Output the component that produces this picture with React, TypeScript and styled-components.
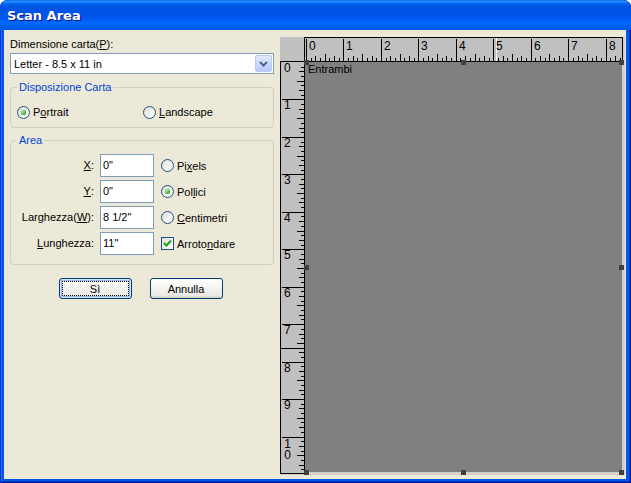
import React from 'react';
import styled, { createGlobalStyle } from 'styled-components';

const PPI = 37.45;

const GlobalStyle = createGlobalStyle`
  html, body {
    margin: 0;
    padding: 0;
    background: #ffffff;
  }
  body {
    font-family: "Liberation Sans", Arial, sans-serif;
    font-size: 11px;
    color: #000;
  }
`;

const Window = styled.div`
  width: 631px;
  height: 483px;
  box-sizing: border-box;
  display: flex;
  flex-direction: column;
  background: #0055ea;
  border-radius: 8px 8px 0 0;
  overflow: hidden;
  box-shadow: inset 1px 0 #0831d9, inset -1px 0 #00138c, inset 0 -1px #00138c,
    inset 2px 0 #166aee, inset -2px 0 #0041c8, inset 0 -2px #0041c8;
`;

const TitleBar = styled.div`
  height: 30px;
  flex: none;
  display: flex;
  align-items: center;
  padding: 1px 0 0 7px;
  box-sizing: border-box;
  background: linear-gradient(
    to bottom,
    #0058ee 0%,
    #3a93ff 4%,
    #288eff 6%,
    #127dff 8%,
    #036ffc 10%,
    #0262ee 14%,
    #0057e5 20%,
    #0054e3 24%,
    #0055eb 56%,
    #005bf5 66%,
    #026afe 76%,
    #0062ef 86%,
    #0058e6 100%
  );
  color: #ffffff;
  font: bold 13px "DejaVu Sans", sans-serif;
  text-shadow: 1px 1px #0f1089;
`;

const Client = styled.div`
  flex: 1;
  margin: 0 5px 4px 4px;
  background: #ece9d8;
  display: flex;
  align-items: flex-start;
`;

const LeftPanel = styled.div`
  width: 276px;
  box-sizing: border-box;
  padding: 8px 6px 0 6px;
  display: flex;
  flex-direction: column;
`;

const FieldLabel = styled.div`
  line-height: 13px;
  margin-bottom: 2px;
`;

const Combo = styled.div`
  height: 21px;
  box-sizing: border-box;
  border: 1px solid #7f9db9;
  background: #ffffff;
  display: flex;
  align-items: center;
  justify-content: space-between;
  padding: 0 1px 0 3px;
`;

const ComboButton = styled.span`
  width: 17px;
  height: 17px;
  box-sizing: border-box;
  border: 1px solid #b9c9f3;
  border-radius: 2px;
  background: linear-gradient(to bottom, #e3ebfe 0%, #cbd9fd 50%, #b6cafa 100%);
  display: flex;
  align-items: center;
  justify-content: center;
`;

const Group = styled.fieldset<{ $top: number }>`
  margin: ${p => p.$top}px 0 0 0;
  padding: 0;
  border: 1px solid #d0d0bf;
  border-radius: 4px;
  min-width: 0;
`;

const Legend = styled.legend`
  color: #0046d5;
  margin-left: 6px;
  padding: 0 2px;
  line-height: 13px;
  font-size: 11px;
`;

const OrientationRow = styled.div`
  display: grid;
  grid-template-columns: 126px 1fr;
  padding: 10px 0 7px 5px;
`;

const AreaGrid = styled.div`
  display: grid;
  grid-template-columns: 83px 54px 1fr;
  grid-auto-rows: 23px;
  column-gap: 6px;
  row-gap: 3px;
  padding: 7px 0 9px 0;
`;

const RowLabel = styled.label`
  display: flex;
  align-items: center;
  justify-content: flex-end;
  padding-bottom: 1px;
`;

const TextBox = styled.input`
  width: 54px;
  height: 23px;
  box-sizing: border-box;
  border: 1px solid #7f9db9;
  padding: 0 2px 2px 2px;
  margin: 0;
  font: 11px "Liberation Sans", Arial, sans-serif;
  color: #000;
  background: #fff;
  outline: none;
`;

const Option = styled.label`
  display: flex;
  align-items: center;
  gap: 3px;
  height: 16px;
  align-self: center;
  padding-left: 1px;
`;

const RadioCircle = styled.span<{ $checked?: boolean }>`
  width: 13px;
  height: 13px;
  flex: none;
  box-sizing: border-box;
  border-radius: 50%;
  border: 1px solid #1c5180;
  background: linear-gradient(135deg, #dcdcd7 0%, #f4f4f0 60%, #ffffff 100%);
  display: flex;
  align-items: center;
  justify-content: center;

  &::after {
    content: '';
    display: ${p => (p.$checked ? 'block' : 'none')};
    width: 5px;
    height: 5px;
    border-radius: 50%;
    background: radial-gradient(circle at 35% 35%, #a8f0a0 0%, #3cbb3c 55%, #1a8c1a 100%);
  }
`;

const CheckBox = styled.span`
  width: 13px;
  height: 13px;
  flex: none;
  box-sizing: border-box;
  border: 1px solid #1c5180;
  background: linear-gradient(135deg, #dcdcd7 0%, #f4f4f0 60%, #ffffff 100%);
  display: flex;
  align-items: center;
  justify-content: center;
`;

const ButtonRow = styled.div`
  display: flex;
  justify-content: center;
  gap: 18px;
  margin-top: 13px;
  padding-right: 3px;
`;

const Button = styled.button<{ $default?: boolean }>`
  position: relative;
  width: 73px;
  height: 21px;
  padding: 0;
  border: 1px solid #003c74;
  border-radius: 3px;
  background: linear-gradient(to bottom, #ffffff 0%, #f5f5f1 40%, #ecebe6 85%, #d6d0c5 100%);
  font: 11px "Liberation Sans", Arial, sans-serif;
  color: #000;
  box-shadow: ${p =>
    p.$default ? 'inset 0 0 0 1px #cee7ff, inset 0 0 0 2px #98b8ea' : 'inset 0 -1px 0 #d6d0c5'};

  &::after {
    content: '';
    display: ${p => (p.$default ? 'block' : 'none')};
    position: absolute;
    inset: 2px;
    border: 1px dotted #000;
  }
`;

const RightPanel = styled.div`
  margin-top: 7px;
  width: 345px;
  height: 438px;
  background: #d4d0c8;
  display: flex;
  flex-direction: column;
`;

const RulerRow = styled.div`
  display: flex;
  height: 25px;
`;

const Corner = styled.div`
  width: 24px;
  height: 25px;
  box-sizing: border-box;
  background: #c0c0c0;
  border-bottom: 1px solid #000;
`;

const TopRuler = styled.div`
  width: 319px;
  height: 25px;
  box-sizing: border-box;
  border: 1px solid #000;
  background: #c0c0c0;

  svg {
    display: block;
  }
`;

const WorkRow = styled.div`
  display: flex;
  align-items: flex-start;
`;

const LeftRuler = styled.div`
  width: 25px;
  height: 412px;
  box-sizing: border-box;
  border: 1px solid #000;
  border-top: none;
  background: #c0c0c0;

  svg {
    display: block;
  }
`;

const PageArea = styled.div`
  position: relative;
  width: 318px;
  height: 410px;
`;

const Page = styled.div`
  width: 317px;
  height: 410px;
  background: #808080;
  padding: 1px 3px;
  box-sizing: border-box;
  line-height: 13px;
`;

const Handle = styled.span`
  position: absolute;
  width: 5px;
  height: 5px;
  background: #404040;
`;

const rulerText = {
  fontFamily: '"Liberation Sans", Arial, sans-serif',
  fontSize: 12,
  fill: '#000',
};

// "10" on the vertical ruler: digits stacked in one text run
const stackedText = {
  ...rulerText,
  writingMode: 'vertical-lr' as const,
  textOrientation: 'upright' as const,
  letterSpacing: '-3px',
};

function TopRulerMarks() {
  const ticks: React.ReactNode[] = [];
  for (let k = 0; k <= 68; k++) {
    const x = Math.round(1 + (k * PPI) / 8) + 0.5;
    let len = 3;
    if (k % 8 === 0) len = 22;
    else if (k % 4 === 0) len = 7;
    else if (k % 2 === 0) len = 5;
    ticks.push(<line key={k} x1={x} x2={x} y1={23 - len} y2={23} />);
  }
  return (
    <svg width={317} height={23}>
      <g stroke="#000" strokeWidth={1} shapeRendering="crispEdges">
        {ticks}
      </g>
      <line x1={191.5} x2={191.5} y1={0} y2={23} stroke="#fff" shapeRendering="crispEdges" />
      {Array.from({ length: 9 }, (_, i) => (
        <text key={i} x={Math.round(1 + i * PPI) + 3} y={12} style={rulerText}>
          {i}
        </text>
      ))}
    </svg>
  );
}

function LeftRulerMarks() {
  const ticks: React.ReactNode[] = [];
  for (let k = 1; k <= 88; k++) {
    const y = Math.round((k * PPI) / 8) + 0.5;
    if (y > 410) break;
    let x1 = 20;
    if (k % 8 === 0) x1 = 1;
    else if (k % 4 === 0) x1 = 16;
    else if (k % 2 === 0) x1 = 18;
    ticks.push(<line key={k} x1={x1} x2={23} y1={y} y2={y} />);
  }
  return (
    <svg width={23} height={411}>
      <g stroke="#000" strokeWidth={1} shapeRendering="crispEdges">
        {ticks}
        <line x1={0} x2={20} y1={286.5} y2={286.5} />
      </g>
      {Array.from({ length: 10 }, (_, i) => (
        <text key={i} x={3} y={Math.round(i * PPI) + 10} style={rulerText}>
          {i}
        </text>
      ))}
      <text x={6.5} y={Math.round(10 * PPI)} style={stackedText}>
        10
      </text>
    </svg>
  );
}

const handleSpots = [
  [-1, -2],
  [156, -2],
  [314, -2],
  [-1, 203],
  [314, 203],
  [-1, 408],
  [156, 408],
  [314, 408],
];

const App = () => {
  return (
    <>
      <GlobalStyle />
      <Window>
        <TitleBar>Scan Area</TitleBar>
        <Client>
          <LeftPanel>
            <FieldLabel>
              Dimensione carta(<u>P</u>):
            </FieldLabel>
            <Combo>
              <span>Letter - 8.5 x 11 in</span>
              <ComboButton>
                <svg width="9" height="6" viewBox="0 0 9 6">
                  <polyline points="1,1 4.5,4.5 8,1" fill="none" stroke="#4d6185" strokeWidth="2" />
                </svg>
              </ComboButton>
            </Combo>

            <Group $top={7}>
              <Legend>Disposizione Carta</Legend>
              <OrientationRow>
                <Option>
                  <RadioCircle $checked />
                  <span>
                    P<u>o</u>rtrait
                  </span>
                </Option>
                <Option>
                  <RadioCircle />
                  <span>
                    <u>L</u>andscape
                  </span>
                </Option>
              </OrientationRow>
            </Group>

            <Group $top={6}>
              <Legend>Area</Legend>
              <AreaGrid>
                <RowLabel>
                  <u>X</u>:
                </RowLabel>
                <TextBox defaultValue={'0"'} />
                <Option>
                  <RadioCircle />
                  <span>
                    Pi<u>x</u>els
                  </span>
                </Option>

                <RowLabel>
                  <u>Y</u>:
                </RowLabel>
                <TextBox defaultValue={'0"'} />
                <Option>
                  <RadioCircle $checked />
                  <span>
                    Pol<u>l</u>ici
                  </span>
                </Option>

                <RowLabel>
                  Larghezza(<u>W</u>):
                </RowLabel>
                <TextBox defaultValue={'8 1/2"'} />
                <Option>
                  <RadioCircle />
                  <span>
                    <u>C</u>entimetri
                  </span>
                </Option>

                <RowLabel>
                  <u>L</u>unghezza:
                </RowLabel>
                <TextBox defaultValue={'11"'} />
                <Option>
                  <CheckBox>
                    <svg width="9" height="9" viewBox="0 0 9 9">
                      <polyline points="1,4 3.5,6.5 8,1.5" fill="none" stroke="#21a121" strokeWidth="2" />
                    </svg>
                  </CheckBox>
                  <span>
                    Arroto<u>n</u>dare
                  </span>
                </Option>
              </AreaGrid>
            </Group>

            <ButtonRow>
              <Button $default>Sì</Button>
              <Button>Annulla</Button>
            </ButtonRow>
          </LeftPanel>

          <RightPanel>
            <RulerRow>
              <Corner />
              <TopRuler>
                <TopRulerMarks />
              </TopRuler>
            </RulerRow>
            <WorkRow>
              <LeftRuler>
                <LeftRulerMarks />
              </LeftRuler>
              <PageArea>
                <Page>Entrambi</Page>
                {handleSpots.map(([x, y], i) => (
                  <Handle key={i} style={{ left: x, top: y }} />
                ))}
              </PageArea>
            </WorkRow>
          </RightPanel>
        </Client>
      </Window>
    </>
  );
};

export default App;
